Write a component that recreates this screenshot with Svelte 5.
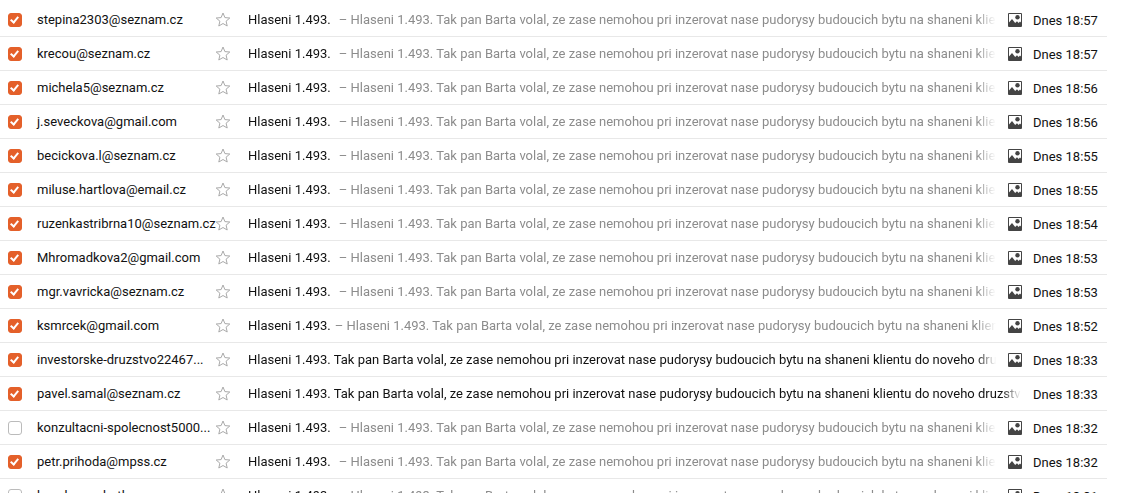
<script lang="ts">
  const subject = "Hlaseni 1.493.";
  const body =
    "Hlaseni 1.493. Tak pan Barta volal, ze zase nemohou pri inzerovat nase pudorysy budoucich bytu na shaneni klientu";

  let messages = $state([
    { from: "stepina2303@seznam.cz", time: "18:57", checked: true },
    { from: "krecou@seznam.cz", time: "18:57", checked: true },
    { from: "michela5@seznam.cz", time: "18:56", checked: true },
    { from: "j.seveckova@gmail.com", time: "18:56", checked: true },
    { from: "becickova.l@seznam.cz", time: "18:55", checked: true },
    { from: "miluse.hartlova@email.cz", time: "18:55", checked: true },
    { from: "ruzenkastribrna10@seznam.cz", time: "18:54", checked: true },
    { from: "Mhromadkova2@gmail.com", time: "18:53", checked: true },
    { from: "mgr.vavricka@seznam.cz", time: "18:53", checked: true },
    { from: "ksmrcek@gmail.com", time: "18:52", checked: true, tight: true },
    { from: "investorske-druzstvo22467...", time: "18:33", checked: true, plain: true },
    { from: "pavel.samal@seznam.cz", time: "18:33", checked: true, plain: true, noImage: true },
    { from: "konzultacni-spolecnost5000...", time: "18:32", checked: false },
    { from: "petr.prihoda@mpss.cz", time: "18:32", checked: true },
    { from: "kozakovambatk", time: "18:31", checked: false },
  ]);
</script>

<ul>
  {#each messages as message}
    <li>
      <input type="checkbox" aria-label={message.from} bind:checked={message.checked} />
      <span class="from">{message.from}</span>
      <button aria-label="Hvězdička">
        <svg width="16" height="16" viewBox="0 0 16 16">
          <path d="M8 1l1.9 4.6 4.9.4-3.7 3.2 1.1 4.8L8 11.5 3.8 14l1.1-4.8L1.2 6l4.9-.4z" />
        </svg>
      </button>
      <a href="#zprava">
        {#if message.plain}
          {body} do noveho druzstva
        {:else}
          {subject}<span class="preview" class:tight={message.tight}>– {body}</span>
        {/if}
      </a>
      {#if !message.noImage}
        <svg class="image" width="14" height="14" viewBox="0 0 14 14">
          <path
            fill-rule="evenodd"
            d="M1 0h12a1 1 0 0 1 1 1v12a1 1 0 0 1-1 1H1a1 1 0 0 1-1-1V1a1 1 0 0 1 1-1zM1 1v8.5L4 6l3.2 4L9 8.3l1.6 1.7L12 8.5l1 1V1z"
          />
          <circle cx="9.5" cy="4.2" r="2.2" />
        </svg>
      {/if}
      <time>Dnes {message.time}</time>
    </li>
  {/each}
</ul>

<style>
  :global(body) {
    background: #fff;
    overflow: hidden;
  }

  ul {
    margin: 0 20px 0 0;
    padding: 3px 0 0;
    list-style: none;

    font-family: Roboto, sans-serif;
    font-size: 13px;
    color: #111;
  }

  li {
    display: flex;
    align-items: center;
    height: 34px;
    padding: 0 8px;
    border-bottom: 1px solid #e8e8e8;
    box-sizing: border-box;
    white-space: nowrap;
  }

  input {
    flex: none;
    width: 14px;
    height: 14px;
    margin: 1px 15px 0 0;
    border: 1px solid #bbb;
    border-radius: 3px;
    background: #fff;
    box-sizing: border-box;
    appearance: none;
  }

  input:checked {
    border-color: #e4602a;
    background: #e4602a;
  }

  input:checked::before {
    content: "";
    display: block;
    width: 3px;
    height: 6px;
    margin: 1px 0 0 3px;
    border: solid #fff;
    border-width: 0 2px 2px 0;
    transform: rotate(40deg);
  }

  .from {
    flex: none;
    width: 178px;
  }

  button {
    display: flex;
    margin: 0 17px 0 0;
    padding: 0;
    border: none;
    background: transparent;
  }

  button path {
    fill: none;
    stroke: #aaa;
  }

  a {
    flex: 1;
    min-width: 0;
    margin-right: 12px;
    overflow: hidden;
    color: inherit;
    text-decoration: none;
    mask-image: linear-gradient(to left, transparent, #000 20px);
  }

  .preview {
    margin-left: 8px;
    color: #8c8c8c;
  }

  .preview.tight {
    margin-left: 4px;
  }

  .image {
    flex: none;
    margin: 1px 11px 0 0;
    fill: #444;
  }

  time {
    flex: none;
    width: 66px;
    padding-top: 1px;
  }
</style>
